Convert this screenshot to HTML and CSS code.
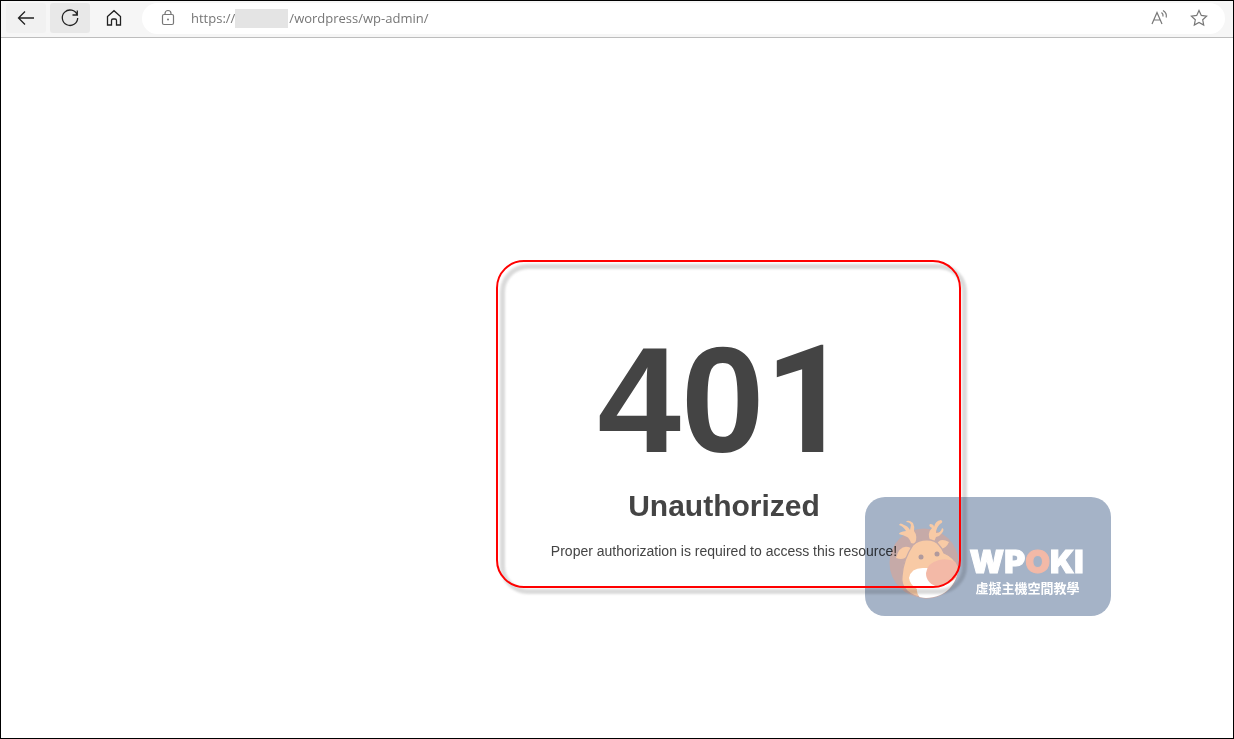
FILE: index.html
```html
<!DOCTYPE html>
<html lang="en">
<head>
    <meta charset="UTF-8">
    <meta name="viewport" content="width=device-width, initial-scale=1.0">
    <title>401 Unauthorized</title>
    <link rel="stylesheet" href="styles.css">
</head>
<body>
    <header class="toolbar">
        <button type="button" class="nav-btn back" aria-label="Back">
            <svg width="20" height="20" viewBox="0 0 20 20"><path d="M18 10H2.500M9 3.500 2.500 10 9 16.500"/></svg>
        </button>
        <button type="button" class="nav-btn reload" aria-label="Refresh">
            <svg width="20" height="20" viewBox="0 0 20 20"><path d="M17.200 7A7.700 7.700 0 1 0 17.700 10M17.300 2.500V7H12.500"/></svg>
        </button>
        <button type="button" class="nav-btn" aria-label="Home">
            <svg width="20" height="20" viewBox="0 0 20 20"><path d="M3.500 8.500 10 2.700l6.500 5.800v8.500h-4v-4.500a1.500 1.500 0 0 0-1.500-1.500h-2a1.500 1.500 0 0 0-1.500 1.500V17h-4z"/></svg>
        </button>
        <form class="address" onsubmit="event.preventDefault();">
            <svg class="lock" width="16" height="18" viewBox="0 0 16 18"><rect x="2.500" y="5.500" width="11" height="10" rx="1.500"/><path d="M5 5.500V4.500a3 3 0 0 1 6 0v1"/><circle class="dot" cx="8" cy="10.500" r="1"/></svg>
            <div class="url">
                <input type="text" aria-label="Address" value="https://                /wordpress/wp-admin/" spellcheck="false">
                <span class="smudge"></span>
            </div>
            <button type="button" class="icon-btn" aria-label="Read aloud">
                <svg width="20" height="20" viewBox="0 0 20 20"><path d="M3 16 8 4.500 13 16M5 12h6.300M12.500 4.500q2 1.500 1.500 4M14 2.500q4.200 2.500 3.200 7"/></svg>
            </button>
            <button type="button" class="icon-btn" aria-label="Add to favorites">
                <svg width="20" height="20" viewBox="0 0 20 20"><path d="m10 2.500 2.300 4.900 5.300.7-3.900 3.700 1 5.300-4.700-2.600-4.700 2.600 1-5.300-3.900-3.700 5.300-.7z"/></svg>
            </button>
        </form>
    </header>

    <main>
        <section class="error">
            <h1>40<span>1</span></h1>
            <h2>Unauthorized</h2>
            <p>Proper authorization is required to access this resource!</p>

            <div class="watermark">
                <svg class="deer" width="74" height="82" viewBox="0 0 74 82">
                    <clipPath id="face"><path d="M25 27C32 20 46 20 51 27Q54 30 56 35Q66 39 70 49C70 66 57 80 38 80C22 79 12 70 14 58C15 46 18 37 25 27z"/></clipPath>
                    <circle cx="36" cy="45" r="34.500" fill="#c6aaa8"/>
                    <g fill="#f8caa5">
                        <path d="M23 25C21 18 17 18 11 16Q11 14 18 13Q15 8 11 7Q12 4 16 7Q20 8 22 12L23 7Q22 4 18 4Q20 1 25 5Q27 9 26 13Q30 18 27 26z"/>
                        <path d="M42 22Q39 15 44 10Q40 8 42 6Q46 6 46 9Q47 3 53 2Q56 4 52 6Q48 10 48 15Q53 15 54 10Q57 11 54 15Q52 18 48 19L46 24z"/>
                        <path d="M23 30Q12 25 8 40Q16 43 20 37zM49 26Q52 19 61 24Q58 31 52 31z"/>
                    </g>
                    <path d="M25 27C32 20 46 20 51 27Q54 30 56 35Q66 39 70 49C70 66 57 80 38 80C22 79 12 70 14 58C15 46 18 37 25 27z" fill="#f8caa5" stroke="#c6aaa8"/>
                    <g clip-path="url(#face)">
                        <path d="M37 50Q23 49 21 60Q22 67 29 71Q28 76 34 82L76 82V50z" fill="#fff"/>
                        <path d="M38 55Q39 45 51 42Q60 40 68 44L74 52Q66 66 51 69Q38 66 38 55z" fill="#f3b9a7"/>
                    </g>
                    <circle cx="33" cy="39" r="2.500" fill="#b09a9d"/>
                    <circle cx="49" cy="36" r="2.500" fill="#b09a9d"/>
                </svg>
                <div class="brand">
                    <strong>WP<i>O</i>KI</strong>
                    <span>虛擬主機空間教學</span>
                </div>
            </div>
        </section>
    </main>
</body>
</html>
```
FILE: styles.css
```css
* { box-sizing: border-box; }
body {
    display: flex;
    flex-direction: column;
    min-height: 100vh;
    margin: 0;
    border: 1px solid #000;
    background: #fff;
    font-family: "Liberation Sans", Arial, sans-serif;
}
button {
    display: flex;
    align-items: center;
    justify-content: center;
    padding: 0;
    border: 0;
    background: none;
    cursor: pointer;
}
svg { fill: none; stroke: #222; stroke-width: 1.3; }

/* browser bar */
.toolbar {
    display: flex;
    align-items: center;
    gap: 4px;
    height: 37px;
    padding: 0 8px 2px 5px;
    border-bottom: 1px solid #bdbdbd;
    background: #f6f6f6;
}
.nav-btn { width: 40px; height: 30px; border-radius: 3px; }
.back { background: #f1f1f1; }
.reload { background: #e8e8e8; }
.address {
    display: flex;
    flex: 1;
    align-items: center;
    height: 31px;
    margin-left: 4px;
    padding: 0 16px 0 18px;
    border-radius: 16px;
    background: #fff;
}
.address svg { stroke: #777; stroke-width: 1.2; }
.address .dot { fill: #777; stroke: none; }
.url { position: relative; flex: 1; margin-left: 15px; }
.url input {
    display: block;
    width: 100%;
    padding: 0;
    border: 0;
    outline: 0;
    color: #767676;
    font: 13px/20px "Open Sans", sans-serif;
}
.smudge {
    position: absolute;
    top: 1px;
    left: 44px;
    width: 53px;
    height: 19px;
    background: #e4e4e4;
}
.icon-btn { width: 20px; height: 20px; margin-left: 20px; }

/* error page */
main { flex: 1; padding: 222px 0 0 222px; }
.error {
    position: relative;
    width: 465px;
    height: 328px;
    margin: 0 auto;
    padding: 65px 8px 0 0;
    color: #444;
    text-align: center;
}
/* outline runs over the watermark, its soft shadow under everything */
.error::before,
.error::after {
    content: "";
    position: absolute;
    border-radius: 28px;
    pointer-events: none;
}
.error::before {
    z-index: -1;
    top: 4px;
    right: -6px;
    bottom: -6px;
    left: 4px;
    border: 5px solid #dadada;
    filter: blur(1px);
}
.error::after {
    inset: 0;
    border: 2px solid #f00;
}
h1 { margin: 0; font-size: 150px; line-height: 150px; }
h1 span { font-family: Roboto, sans-serif; }
h2 { margin: 12px 0 0; font-size: 30px; line-height: 36px; }
p { margin: 17px 0 0; font-size: 14px; line-height: 20px; }

.watermark {
    position: absolute;
    top: 237px;
    left: 369px;
    display: flex;
    align-items: center;
    gap: 8px;
    width: 246px;
    height: 119px;
    padding: 4px 0 0 23px;
    border-radius: 20px;
    background: #a5b3c7;
    color: #fff;
    mix-blend-mode: multiply;
}
.deer { stroke: none; }
.brand { display: flex; flex-direction: column; padding-top: 24px; text-align: left; }
.brand strong { font: 900 32px/34px Inter, sans-serif; -webkit-text-stroke: 1px; }
.brand i { color: #f3b9a7; font-style: normal; }
.brand span { margin-left: 6px; font: 700 13px/18px "Noto Sans CJK TC", sans-serif; }
```
